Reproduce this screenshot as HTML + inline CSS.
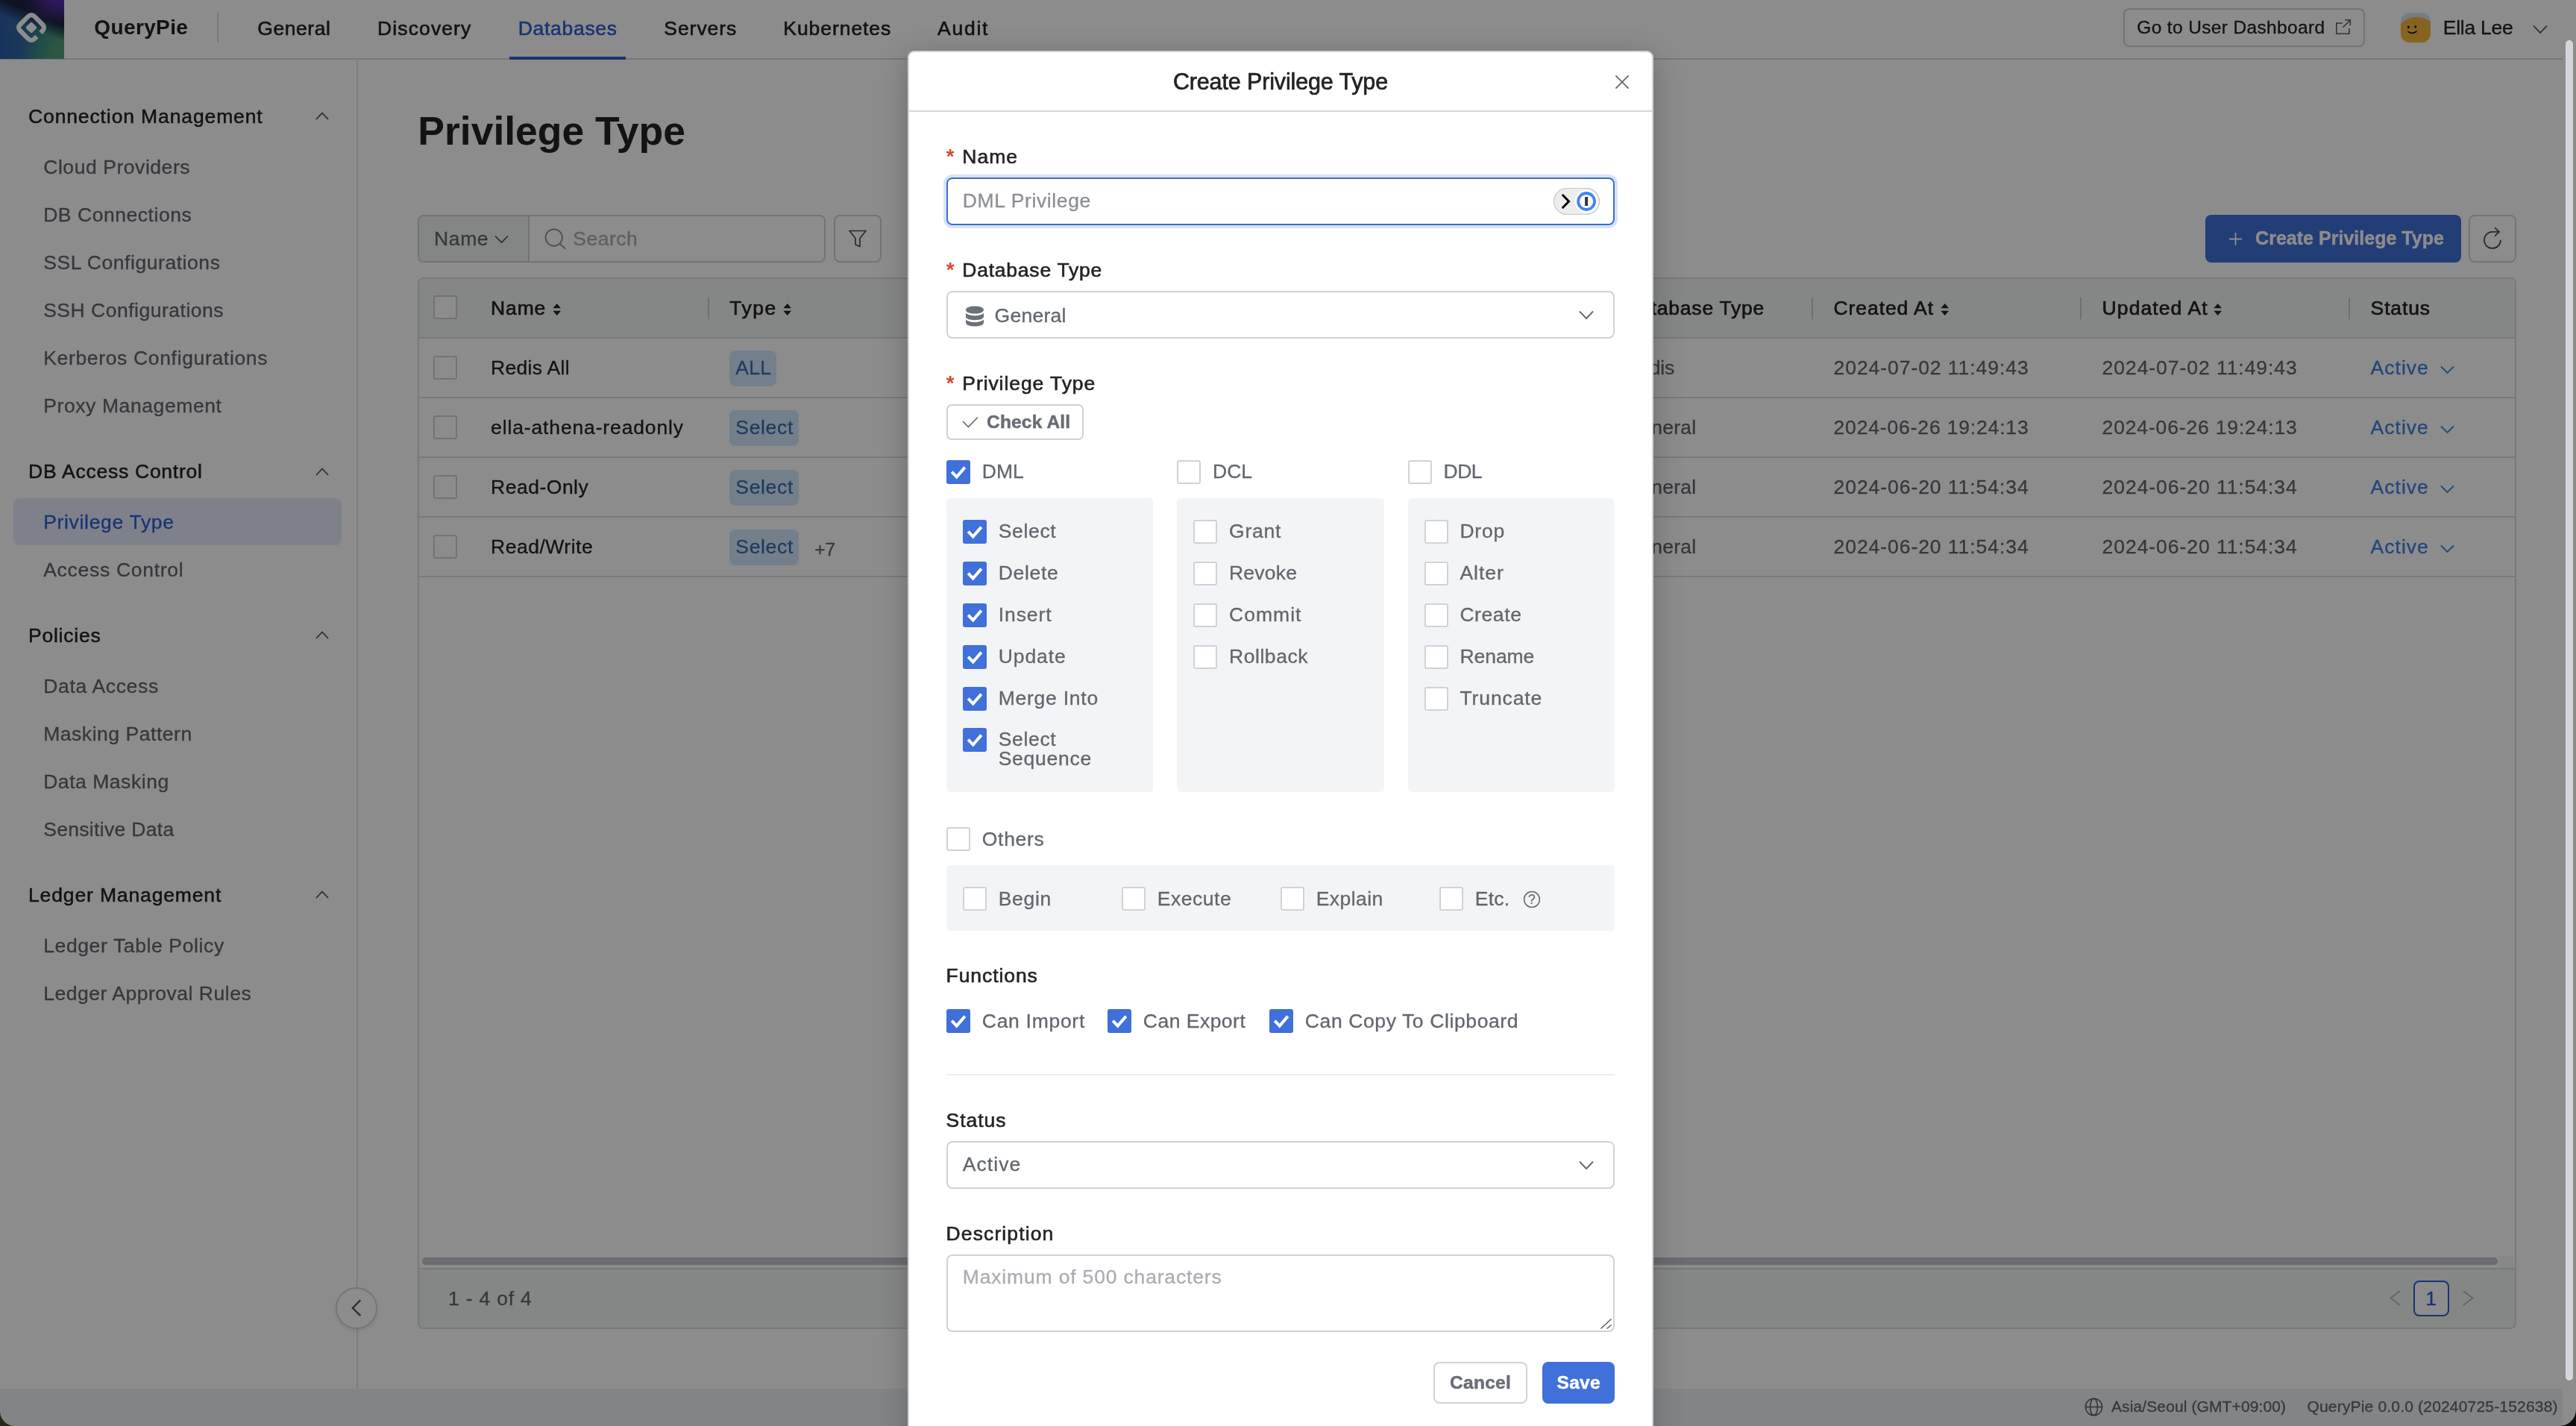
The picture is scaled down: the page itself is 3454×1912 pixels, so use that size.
<!DOCTYPE html>
<html lang="en"><head><meta charset="utf-8"><title>QueryPie - Privilege Type</title>
<style>
*{box-sizing:border-box;margin:0;padding:0}
html,body{width:3454px;height:1912px;overflow:hidden;background:#fff}
body{position:relative;font-family:"Liberation Sans",Arial,sans-serif;-webkit-font-smoothing:antialiased}
.t{position:absolute;white-space:nowrap;display:block}
#app{will-change:transform;position:absolute;left:0;top:0;width:3436px;height:1912px;overflow:hidden;background:#fff}
#mask{position:absolute;left:0;top:0;width:3454px;height:1912px;background:rgba(0,0,0,.45)}
#modal{will-change:transform;position:absolute;left:1217px;top:68px;width:1000px;height:1900px;background:#fff;border:2px solid #d0d3d9;border-radius:9px;box-shadow:0 8px 40px rgba(0,0,0,.22)}
.cb{position:absolute;width:32px;height:32px;border-radius:3px;background:#fff;border:2px solid #cfd2d8}
.cb.on{background:#4070d9;border:0}
.cb.on svg{position:absolute;left:0;top:0}
.gb{position:absolute;background:#f3f4f6;border-radius:5px}
.inp{position:absolute;background:#fff;border:2px solid #cfd2d8;border-radius:8px}
.btn{position:absolute;border:2px solid #cfd2d8;border-radius:8px;background:#fff}
.hl{position:absolute;background:#d9dce1}

</style></head><body>
<div id="app"><header>
<div style="position:absolute;left:0px;top:0px;width:3436px;height:80px;background:#fff;border-bottom:2px solid #d5d9df"></div>
<div style="position:absolute;left:0px;top:0px;width:86px;height:79px;background:radial-gradient(ellipse 50px 34px at 92% 0%, #5a2fb0 0%, rgba(90,47,176,0) 100%),linear-gradient(203deg, #3b2379 0%, #1e2038 18%, #1b2642 31%, rgba(30,50,75,0) 49%),radial-gradient(ellipse 60px 50px at 100% 100%, #56a077 0%, rgba(86,160,119,0) 100%),linear-gradient(to right, #2d5bad 0%, #2f6f9c 45%, #3d8a85 75%, #4f9a78 100%);"><svg width="86" height="79" viewBox="0 0 86 79" fill="none" style="position:absolute;left:0;top:0"><g transform="translate(42 37) rotate(45)"><rect x="-13.6" y="-13.6" width="27.2" height="27.2" rx="5.8" stroke="#fff" stroke-width="6.3" stroke-dasharray="28.2 7.4 200"/><rect x="-5.7" y="-5.7" width="11.4" height="11.4" rx="2.4" fill="#fff"/></g></svg></div>
<span class="t" id="t0" style="top:18.7px;height:36px;line-height:36px;font-size:28.0px;color:#232325;font-weight:700;left:126.3px;letter-spacing:0.38px;">QueryPie</span>
<div style="position:absolute;left:291px;top:17px;width:2px;height:40px;background:#d9dce1"></div>
<span class="t" id="t1" style="top:20.9px;height:34px;line-height:34px;font-size:26.5px;color:#232325;-webkit-text-stroke:0.6px #232325;left:345.3px;letter-spacing:0.55px;">General</span>
<span class="t" id="t2" style="top:20.9px;height:34px;line-height:34px;font-size:26.5px;color:#232325;-webkit-text-stroke:0.6px #232325;left:506.1px;letter-spacing:1.11px;">Discovery</span>
<span class="t" id="t3" style="top:20.9px;height:34px;line-height:34px;font-size:26.5px;color:#2f5fd0;-webkit-text-stroke:0.6px #2f5fd0;left:694.7px;letter-spacing:0.71px;">Databases</span>
<span class="t" id="t4" style="top:20.9px;height:34px;line-height:34px;font-size:26.5px;color:#232325;-webkit-text-stroke:0.6px #232325;left:890.3px;letter-spacing:0.95px;">Servers</span>
<span class="t" id="t5" style="top:20.9px;height:34px;line-height:34px;font-size:26.5px;color:#232325;-webkit-text-stroke:0.6px #232325;left:1050.3px;letter-spacing:0.94px;">Kubernetes</span>
<span class="t" id="t6" style="top:20.9px;height:34px;line-height:34px;font-size:26.5px;color:#232325;-webkit-text-stroke:0.6px #232325;left:1257.0px;letter-spacing:1.77px;">Audit</span>
<div style="position:absolute;left:683px;top:76px;width:156px;height:4px;background:#2f5fd0"></div>
<div style="position:absolute;left:2847px;top:11px;width:323.5px;height:51.5px;border:2px solid #cfd2d8;border-radius:8px;background:#fff"></div>
<span class="t" id="t7" style="top:20.6px;height:32px;line-height:32px;font-size:24.5px;color:#232325;-webkit-text-stroke:0.3px #232325;left:2865.3px;letter-spacing:0.35px;">Go to User Dashboard</span>
<svg style="position:absolute;left:3131.6px;top:25.9px;" width="21" height="21" viewBox="0 0 21 21" fill="none"><path d="M8.8 5 H0.8 V19.3 H17.9 V12" stroke="#5a5f66" stroke-width="1.6"/><path d="M12.2 0.8 H19.3 V8 M19.1 1 L9.4 10.7" stroke="#5a5f66" stroke-width="1.6"/></svg>
<div style="position:absolute;left:3219px;top:17px;width:40px;height:40px;"><svg width="40" height="40" viewBox="0 0 40 40" style="position:absolute;left:0;top:0"><defs><clipPath id="avc"><rect width="40" height="40" rx="12"/></clipPath></defs><g clip-path="url(#avc)"><rect width="40" height="40" fill="#d6e3f3"/><circle cx="21.5" cy="35.8" r="30" fill="#f5b43c"/><ellipse cx="10.4" cy="19.3" rx="1.4" ry="1.9" fill="#111"/><ellipse cx="19.8" cy="18.8" rx="1.4" ry="1.9" fill="#111"/><path d="M10.2 25.6 Q15.5 29.2 21 25.2" stroke="#111" stroke-width="1.7" fill="none" stroke-linecap="round"/></g></svg></div>
<span class="t" id="t8" style="top:19.7px;height:34px;line-height:34px;font-size:26.5px;color:#232325;-webkit-text-stroke:0.3px #232325;left:3275.7px;letter-spacing:-0.23px;">Ella Lee</span>
<svg style="position:absolute;left:3396px;top:32.5px;" width="20" height="13" viewBox="0 0 20 13" fill="none"><path d="M1 1.5 L10.0 11 L19 1.5" stroke="#4b4e54" stroke-width="1.8" stroke-linejoin="miter"/></svg>
</header>
<aside>
<div style="position:absolute;left:0px;top:80px;width:480px;height:1782px;background:#fff;border-right:2px solid #e0e3e8"></div>
<div style="position:absolute;left:18px;top:668px;width:439.5px;height:63px;background:#e6ecfb;border-radius:8px"></div>
<span class="t" id="t9" style="top:138.7px;height:34px;line-height:34px;font-size:26.5px;color:#232325;-webkit-text-stroke:0.5px #232325;left:38.0px;letter-spacing:0.88px;">Connection Management</span>
<svg style="position:absolute;left:422.8px;top:150.2px;" width="18" height="12" viewBox="0 0 18 12" fill="none"><path d="M1 10 L9.0 1.5 L17 10" stroke="#4b4e54" stroke-width="1.7" stroke-linejoin="miter"/></svg>
<span class="t" id="t10" style="top:615.0px;height:34px;line-height:34px;font-size:26.5px;color:#232325;-webkit-text-stroke:0.5px #232325;left:38.0px;letter-spacing:0.75px;">DB Access Control</span>
<svg style="position:absolute;left:422.8px;top:626.5px;" width="18" height="12" viewBox="0 0 18 12" fill="none"><path d="M1 10 L9.0 1.5 L17 10" stroke="#4b4e54" stroke-width="1.7" stroke-linejoin="miter"/></svg>
<span class="t" id="t11" style="top:834.6px;height:34px;line-height:34px;font-size:26.5px;color:#232325;-webkit-text-stroke:0.5px #232325;left:38.0px;letter-spacing:0.77px;">Policies</span>
<svg style="position:absolute;left:422.8px;top:846.1px;" width="18" height="12" viewBox="0 0 18 12" fill="none"><path d="M1 10 L9.0 1.5 L17 10" stroke="#4b4e54" stroke-width="1.7" stroke-linejoin="miter"/></svg>
<span class="t" id="t12" style="top:1182.5px;height:34px;line-height:34px;font-size:26.5px;color:#232325;-webkit-text-stroke:0.5px #232325;left:38.0px;letter-spacing:0.86px;">Ledger Management</span>
<svg style="position:absolute;left:422.8px;top:1194.0px;" width="18" height="12" viewBox="0 0 18 12" fill="none"><path d="M1 10 L9.0 1.5 L17 10" stroke="#4b4e54" stroke-width="1.7" stroke-linejoin="miter"/></svg>
<span class="t" id="t13" style="top:206.9px;height:34px;line-height:34px;font-size:26.5px;color:#61666e;-webkit-text-stroke:0.3px #61666e;left:58.2px;letter-spacing:0.56px;">Cloud Providers</span>
<span class="t" id="t14" style="top:270.8px;height:34px;line-height:34px;font-size:26.5px;color:#61666e;-webkit-text-stroke:0.3px #61666e;left:58.2px;letter-spacing:0.54px;">DB Connections</span>
<span class="t" id="t15" style="top:334.8px;height:34px;line-height:34px;font-size:26.5px;color:#61666e;-webkit-text-stroke:0.3px #61666e;left:58.2px;letter-spacing:0.55px;">SSL Configurations</span>
<span class="t" id="t16" style="top:398.7px;height:34px;line-height:34px;font-size:26.5px;color:#61666e;-webkit-text-stroke:0.3px #61666e;left:58.2px;letter-spacing:0.51px;">SSH Configurations</span>
<span class="t" id="t17" style="top:462.7px;height:34px;line-height:34px;font-size:26.5px;color:#61666e;-webkit-text-stroke:0.3px #61666e;left:58.2px;letter-spacing:0.66px;">Kerberos Configurations</span>
<span class="t" id="t18" style="top:526.6px;height:34px;line-height:34px;font-size:26.5px;color:#61666e;-webkit-text-stroke:0.3px #61666e;left:58.2px;letter-spacing:0.60px;">Proxy Management</span>
<span class="t" id="t19" style="top:682.7px;height:34px;line-height:34px;font-size:26.5px;color:#2f5fd0;-webkit-text-stroke:0.3px #2f5fd0;left:58.2px;letter-spacing:0.68px;">Privilege Type</span>
<span class="t" id="t20" style="top:746.7px;height:34px;line-height:34px;font-size:26.5px;color:#61666e;-webkit-text-stroke:0.3px #61666e;left:58.2px;letter-spacing:0.71px;">Access Control</span>
<span class="t" id="t21" style="top:902.8px;height:34px;line-height:34px;font-size:26.5px;color:#61666e;-webkit-text-stroke:0.3px #61666e;left:58.2px;letter-spacing:0.67px;">Data Access</span>
<span class="t" id="t22" style="top:966.7px;height:34px;line-height:34px;font-size:26.5px;color:#61666e;-webkit-text-stroke:0.3px #61666e;left:58.2px;letter-spacing:0.54px;">Masking Pattern</span>
<span class="t" id="t23" style="top:1030.7px;height:34px;line-height:34px;font-size:26.5px;color:#61666e;-webkit-text-stroke:0.3px #61666e;left:58.2px;letter-spacing:0.54px;">Data Masking</span>
<span class="t" id="t24" style="top:1094.6px;height:34px;line-height:34px;font-size:26.5px;color:#61666e;-webkit-text-stroke:0.3px #61666e;left:58.2px;letter-spacing:0.32px;">Sensitive Data</span>
<span class="t" id="t25" style="top:1251.0px;height:34px;line-height:34px;font-size:26.5px;color:#61666e;-webkit-text-stroke:0.3px #61666e;left:58.2px;letter-spacing:0.62px;">Ledger Table Policy</span>
<span class="t" id="t26" style="top:1315.3px;height:34px;line-height:34px;font-size:26.5px;color:#61666e;-webkit-text-stroke:0.3px #61666e;left:58.2px;letter-spacing:0.52px;">Ledger Approval Rules</span>
<div style="position:absolute;left:450px;top:1726px;width:56px;height:56px;border-radius:50%;background:#fff;border:2px solid #d3d7dd;box-shadow:0 2px 5px rgba(0,0,0,.10)"><svg width="52" height="52" viewBox="0 0 52 52" fill="none"><path d="M31.3 15.3 L20.9 25.7 L31.3 36.1" stroke="#4b4e54" stroke-width="2.3" stroke-linejoin="miter"/></svg></div>
</aside>
<footer>
<div style="position:absolute;left:0px;top:1862px;width:3436px;height:50px;background:#eef0f4"></div>
<svg style="position:absolute;left:2794.5px;top:1873.5px;" width="25" height="25" viewBox="0 0 25 25" fill="none"><circle cx="12.5" cy="12.5" r="11.2" stroke="#5a5f66" stroke-width="1.5"/><ellipse cx="12.5" cy="12.5" rx="5" ry="11.2" stroke="#5a5f66" stroke-width="1.5"/><path d="M1.3 12.5 H23.7" stroke="#5a5f66" stroke-width="1.5"/></svg>
<span class="t" id="t27" style="top:1872.1px;height:27px;line-height:27px;font-size:21.0px;color:#61666e;-webkit-text-stroke:0.3px #61666e;left:2831.0px;letter-spacing:0.11px;">Asia/Seoul (GMT+09:00)</span>
<span class="t" id="t28" style="top:1872.1px;height:27px;line-height:27px;font-size:21.0px;color:#61666e;-webkit-text-stroke:0.3px #61666e;left:3093.5px;letter-spacing:0.18px;">QueryPie 0.0.0 (20240725-152638)</span>
</footer>
<main>
<span class="t" id="t29" style="top:140.5px;height:70px;line-height:70px;font-size:53.5px;color:#232325;font-weight:700;left:560.3px;letter-spacing:-0.01px;">Privilege Type</span>
<div style="position:absolute;left:560px;top:288px;width:547px;height:64px;border:2px solid #cfd2d8;border-radius:8px;background:#fff;overflow:hidden"><div style="position:absolute;left:0;top:0;width:148px;height:60px;background:#f1f3f3;border-right:2px solid #cfd2d8"></div></div>
<span class="t" id="t30" style="top:303.0px;height:34px;line-height:34px;font-size:26.5px;color:#61666e;-webkit-text-stroke:0.3px #61666e;left:582.0px;letter-spacing:0.63px;">Name</span>
<svg style="position:absolute;left:663px;top:314.5px;" width="19" height="12" viewBox="0 0 19 12" fill="none"><path d="M1 1.5 L9.5 10 L18 1.5" stroke="#4b4e54" stroke-width="1.7" stroke-linejoin="miter"/></svg>
<svg style="position:absolute;left:729.5px;top:306px;" width="29" height="29" viewBox="0 0 29 29" fill="none"><circle cx="12.7" cy="12.6" r="11.2" stroke="#858a92" stroke-width="1.7"/><path d="M20.8 20.8 L27.6 27.4" stroke="#858a92" stroke-width="1.7" stroke-linecap="round"/></svg>
<span class="t" id="t31" style="top:303.0px;height:34px;line-height:34px;font-size:26.5px;color:#a8adb5;-webkit-text-stroke:0.3px #a8adb5;left:768.3px;letter-spacing:0.52px;">Search</span>
<div style="position:absolute;left:1118px;top:288px;width:64px;height:64px;border:2px solid #cfd2d8;border-radius:8px;background:#fff"><svg width="60" height="60" viewBox="-1 -1 60 60" fill="none"><path d="M18 18.5 H40 L32 28.5 V39.5 L26 37 V28.5 Z" stroke="#4b4e54" stroke-width="1.7" stroke-linejoin="round"/></svg></div>
<div style="position:absolute;left:2957px;top:288px;width:343px;height:64px;background:#4070d9;border-radius:8px"></div>
<svg style="position:absolute;left:2987.5px;top:310.5px;" width="19" height="19" viewBox="0 0 19 19" fill="none"><path d="M9.5 1 V18 M1 9.5 H18" stroke="#fff" stroke-width="1.8"/></svg>
<span class="t" id="t32" style="top:303.0px;height:32px;line-height:32px;font-size:25.0px;color:#ffffff;font-weight:700;-webkit-text-stroke:0.4px #ffffff;left:3024.1px;letter-spacing:0.02px;">Create Privilege Type</span>
<div style="position:absolute;left:3310px;top:288px;width:64px;height:64px;border:2px solid #cfd2d8;border-radius:8px;background:#fff"><svg width="60" height="60" viewBox="0 0 60 60" fill="none"><path d="M40.9 32.4 A11 11 0 1 1 29.9 20.9 L38.6 20.9" stroke="#4b4e54" stroke-width="1.8" stroke-linecap="round"/><path d="M33.5 15.6 L39 20.9 L33.5 26.1" stroke="#4b4e54" stroke-width="1.8" stroke-linecap="round" stroke-linejoin="round"/></svg></div>
<div style="position:absolute;left:560px;top:372px;width:2814px;height:1410px;border:2px solid #d9dce1;border-radius:8px;background:#fff;overflow:hidden"><div style="position:absolute;left:0;top:0;width:2810px;height:78px;background:#f2f4f4"></div><div style="position:absolute;left:0;top:1327px;width:2810px;height:79px;background:#f2f4f4"></div></div>
<div style="position:absolute;left:562px;top:452px;width:2810px;height:2px;background:#d9dce1"></div>
<div style="position:absolute;left:562px;top:532px;width:2810px;height:2px;background:#d9dce1"></div>
<div style="position:absolute;left:562px;top:612px;width:2810px;height:2px;background:#d9dce1"></div>
<div style="position:absolute;left:562px;top:692px;width:2810px;height:2px;background:#d9dce1"></div>
<div style="position:absolute;left:562px;top:772px;width:2810px;height:2px;background:#d9dce1"></div>
<div style="position:absolute;left:562px;top:1700px;width:2810px;height:2px;background:#d9dce1"></div>
<div style="position:absolute;left:566px;top:1686px;width:2783px;height:10px;background:#c1c5cb;border-radius:5px"></div>
<div style="position:absolute;left:3349px;top:1684px;width:22px;height:16px;background:#f6f7f8"></div>
<div class="cb" style="left:581px;top:396px"></div>
<span class="t" id="t33" style="top:396.0px;height:34px;line-height:34px;font-size:26.5px;color:#232325;-webkit-text-stroke:0.65px #232325;left:658.1px;letter-spacing:0.83px;">Name</span>
<svg style="position:absolute;left:741px;top:404.5px;" width="11.4" height="20" viewBox="0 0 11.4 20" fill="none"><path d="M5.7 2 L11 8.3 H0.4 Z M5.7 18 L0.4 11.7 H11 Z" fill="#232325"/></svg>
<div style="position:absolute;left:949px;top:398.5px;width:2px;height:29px;background:#c9ccd2"></div>
<span class="t" id="t34" style="top:396.0px;height:34px;line-height:34px;font-size:26.5px;color:#232325;-webkit-text-stroke:0.65px #232325;left:978.3px;letter-spacing:1.51px;">Type</span>
<svg style="position:absolute;left:1050px;top:404.5px;" width="11.4" height="20" viewBox="0 0 11.4 20" fill="none"><path d="M5.7 2 L11 8.3 H0.4 Z M5.7 18 L0.4 11.7 H11 Z" fill="#232325"/></svg>
<span class="t" id="t35" style="top:396.0px;height:34px;line-height:34px;font-size:26.5px;color:#232325;-webkit-text-stroke:0.65px #232325;left:2178.3px;letter-spacing:0.77px;">Database Type</span>
<div style="position:absolute;left:2429px;top:398.5px;width:2px;height:29px;background:#c9ccd2"></div>
<span class="t" id="t36" style="top:396.0px;height:34px;line-height:34px;font-size:26.5px;color:#232325;-webkit-text-stroke:0.65px #232325;left:2458.5px;letter-spacing:0.93px;">Created At</span>
<svg style="position:absolute;left:2601.5px;top:404.5px;" width="11.4" height="20" viewBox="0 0 11.4 20" fill="none"><path d="M5.7 2 L11 8.3 H0.4 Z M5.7 18 L0.4 11.7 H11 Z" fill="#232325"/></svg>
<div style="position:absolute;left:2789px;top:398.5px;width:2px;height:29px;background:#c9ccd2"></div>
<span class="t" id="t37" style="top:396.0px;height:34px;line-height:34px;font-size:26.5px;color:#232325;-webkit-text-stroke:0.65px #232325;left:2818.6px;letter-spacing:1.09px;">Updated At</span>
<svg style="position:absolute;left:2968px;top:404.5px;" width="11.4" height="20" viewBox="0 0 11.4 20" fill="none"><path d="M5.7 2 L11 8.3 H0.4 Z M5.7 18 L0.4 11.7 H11 Z" fill="#232325"/></svg>
<div style="position:absolute;left:3149px;top:398.5px;width:2px;height:29px;background:#c9ccd2"></div>
<span class="t" id="t38" style="top:396.0px;height:34px;line-height:34px;font-size:26.5px;color:#232325;-webkit-text-stroke:0.65px #232325;left:3178.6px;letter-spacing:0.87px;">Status</span>
<div class="cb" style="left:581px;top:477.4px"></div>
<span class="t" id="t39" style="top:476.4px;height:34px;line-height:34px;font-size:26.5px;color:#232325;-webkit-text-stroke:0.3px #232325;left:658.1px;letter-spacing:0.30px;">Redis All</span>
<div style="position:absolute;left:978px;top:469.9px;width:63px;height:48px;background:#d4e8ff;border-radius:8px"></div>
<span class="t" id="t40" style="top:476.4px;height:34px;line-height:34px;font-size:26.5px;color:#3b6fa8;-webkit-text-stroke:0.3px #3b6fa8;left:986.3px;letter-spacing:0.32px;">ALL</span>
<span class="t" id="t41" style="top:476.4px;height:34px;line-height:34px;font-size:26.5px;color:#61666e;-webkit-text-stroke:0.3px #61666e;left:2178.3px;letter-spacing:-0.19px;">Redis</span>
<span class="t" id="t42" style="top:476.4px;height:34px;line-height:34px;font-size:26.5px;color:#61666e;-webkit-text-stroke:0.3px #61666e;left:2458.5px;letter-spacing:0.95px;">2024-07-02 11:49:43</span>
<span class="t" id="t43" style="top:476.4px;height:34px;line-height:34px;font-size:26.5px;color:#61666e;-webkit-text-stroke:0.3px #61666e;left:2818.6px;letter-spacing:0.95px;">2024-07-02 11:49:43</span>
<span class="t" id="t44" style="top:476.4px;height:34px;line-height:34px;font-size:26.5px;color:#3f83dd;-webkit-text-stroke:0.3px #3f83dd;left:3178.6px;letter-spacing:1.00px;">Active</span>
<svg style="position:absolute;left:3272px;top:490.4px;" width="19" height="12" viewBox="0 0 19 12" fill="none"><path d="M1 1.5 L9.5 10 L18 1.5" stroke="#3f83dd" stroke-width="1.8" stroke-linejoin="miter"/></svg>
<div class="cb" style="left:581px;top:557.4px"></div>
<span class="t" id="t45" style="top:556.4px;height:34px;line-height:34px;font-size:26.5px;color:#232325;-webkit-text-stroke:0.3px #232325;left:658.1px;letter-spacing:0.86px;">ella-athena-readonly</span>
<div style="position:absolute;left:978px;top:549.9px;width:93px;height:48px;background:#d4e8ff;border-radius:8px"></div>
<span class="t" id="t46" style="top:556.4px;height:34px;line-height:34px;font-size:26.5px;color:#3b6fa8;-webkit-text-stroke:0.3px #3b6fa8;left:986.3px;letter-spacing:0.67px;">Select</span>
<span class="t" id="t47" style="top:556.4px;height:34px;line-height:34px;font-size:26.5px;color:#61666e;-webkit-text-stroke:0.3px #61666e;left:2178.3px;letter-spacing:0.28px;">General</span>
<span class="t" id="t48" style="top:556.4px;height:34px;line-height:34px;font-size:26.5px;color:#61666e;-webkit-text-stroke:0.3px #61666e;left:2458.5px;letter-spacing:0.84px;">2024-06-26 19:24:13</span>
<span class="t" id="t49" style="top:556.4px;height:34px;line-height:34px;font-size:26.5px;color:#61666e;-webkit-text-stroke:0.3px #61666e;left:2818.6px;letter-spacing:0.84px;">2024-06-26 19:24:13</span>
<span class="t" id="t50" style="top:556.4px;height:34px;line-height:34px;font-size:26.5px;color:#3f83dd;-webkit-text-stroke:0.3px #3f83dd;left:3178.6px;letter-spacing:1.00px;">Active</span>
<svg style="position:absolute;left:3272px;top:570.4px;" width="19" height="12" viewBox="0 0 19 12" fill="none"><path d="M1 1.5 L9.5 10 L18 1.5" stroke="#3f83dd" stroke-width="1.8" stroke-linejoin="miter"/></svg>
<div class="cb" style="left:581px;top:637.4px"></div>
<span class="t" id="t51" style="top:636.4px;height:34px;line-height:34px;font-size:26.5px;color:#232325;-webkit-text-stroke:0.3px #232325;left:658.1px;letter-spacing:0.50px;">Read-Only</span>
<div style="position:absolute;left:978px;top:629.9px;width:93px;height:48px;background:#d4e8ff;border-radius:8px"></div>
<span class="t" id="t52" style="top:636.4px;height:34px;line-height:34px;font-size:26.5px;color:#3b6fa8;-webkit-text-stroke:0.3px #3b6fa8;left:986.3px;letter-spacing:0.67px;">Select</span>
<span class="t" id="t53" style="top:636.4px;height:34px;line-height:34px;font-size:26.5px;color:#61666e;-webkit-text-stroke:0.3px #61666e;left:2178.3px;letter-spacing:0.28px;">General</span>
<span class="t" id="t54" style="top:636.4px;height:34px;line-height:34px;font-size:26.5px;color:#61666e;-webkit-text-stroke:0.3px #61666e;left:2458.5px;letter-spacing:0.95px;">2024-06-20 11:54:34</span>
<span class="t" id="t55" style="top:636.4px;height:34px;line-height:34px;font-size:26.5px;color:#61666e;-webkit-text-stroke:0.3px #61666e;left:2818.6px;letter-spacing:0.95px;">2024-06-20 11:54:34</span>
<span class="t" id="t56" style="top:636.4px;height:34px;line-height:34px;font-size:26.5px;color:#3f83dd;-webkit-text-stroke:0.3px #3f83dd;left:3178.6px;letter-spacing:1.00px;">Active</span>
<svg style="position:absolute;left:3272px;top:650.4px;" width="19" height="12" viewBox="0 0 19 12" fill="none"><path d="M1 1.5 L9.5 10 L18 1.5" stroke="#3f83dd" stroke-width="1.8" stroke-linejoin="miter"/></svg>
<div class="cb" style="left:581px;top:717.4px"></div>
<span class="t" id="t57" style="top:716.4px;height:34px;line-height:34px;font-size:26.5px;color:#232325;-webkit-text-stroke:0.3px #232325;left:658.1px;letter-spacing:0.50px;">Read/Write</span>
<div style="position:absolute;left:978px;top:709.9px;width:93px;height:48px;background:#d4e8ff;border-radius:8px"></div>
<span class="t" id="t58" style="top:716.4px;height:34px;line-height:34px;font-size:26.5px;color:#3b6fa8;-webkit-text-stroke:0.3px #3b6fa8;left:986.3px;letter-spacing:0.67px;">Select</span>
<span class="t" id="t59" style="top:720.8px;height:32px;line-height:32px;font-size:24.5px;color:#61666e;-webkit-text-stroke:0.3px #61666e;left:1092.2px;letter-spacing:0.00px;">+7</span>
<span class="t" id="t60" style="top:716.4px;height:34px;line-height:34px;font-size:26.5px;color:#61666e;-webkit-text-stroke:0.3px #61666e;left:2178.3px;letter-spacing:0.28px;">General</span>
<span class="t" id="t61" style="top:716.4px;height:34px;line-height:34px;font-size:26.5px;color:#61666e;-webkit-text-stroke:0.3px #61666e;left:2458.5px;letter-spacing:0.95px;">2024-06-20 11:54:34</span>
<span class="t" id="t62" style="top:716.4px;height:34px;line-height:34px;font-size:26.5px;color:#61666e;-webkit-text-stroke:0.3px #61666e;left:2818.6px;letter-spacing:0.95px;">2024-06-20 11:54:34</span>
<span class="t" id="t63" style="top:716.4px;height:34px;line-height:34px;font-size:26.5px;color:#3f83dd;-webkit-text-stroke:0.3px #3f83dd;left:3178.6px;letter-spacing:1.00px;">Active</span>
<svg style="position:absolute;left:3272px;top:730.4px;" width="19" height="12" viewBox="0 0 19 12" fill="none"><path d="M1 1.5 L9.5 10 L18 1.5" stroke="#3f83dd" stroke-width="1.8" stroke-linejoin="miter"/></svg>
<span class="t" id="t64" style="top:1724.0px;height:34px;line-height:34px;font-size:26.5px;color:#61666e;-webkit-text-stroke:0.3px #61666e;left:601.0px;letter-spacing:0.79px;">1 - 4 of 4</span>
<svg style="position:absolute;left:3203px;top:1729px;" width="18" height="24" viewBox="0 0 18 24" fill="none"><path d="M15 2 L2.5 11.5 L15 21" stroke="#b2b6bc" stroke-width="1.8" stroke-linejoin="miter"/></svg>
<div style="position:absolute;left:3236px;top:1717px;width:48px;height:48px;border:2px solid #2f5fd0;border-radius:8px;background:#fff"></div>
<span class="t" id="t65" style="top:1724.0px;height:34px;line-height:34px;font-size:26.5px;color:#2f5fd0;-webkit-text-stroke:0.3px #2f5fd0;left:3252.2px;letter-spacing:0.79px;">1</span>
<svg style="position:absolute;left:3300px;top:1729px;" width="18" height="24" viewBox="0 0 18 24" fill="none"><path d="M3 2 L15.5 11.5 L3 21" stroke="#b2b6bc" stroke-width="1.8" stroke-linejoin="miter"/></svg>
</main></div>
<div id="mask"></div>
<div id="modal" role="dialog"><div style="position:absolute;left:-1219px;top:-70px;width:0;height:0"><div style="position:absolute;left:1219px;top:148px;width:996px;height:2px;background:#d3d6dc"></div>
<span class="t" id="t66" style="top:89.0px;height:40px;line-height:40px;font-size:30.5px;color:#232325;-webkit-text-stroke:0.7px #232325;left:1572.9px;letter-spacing:-0.14px;">Create Privilege Type</span>
<svg style="position:absolute;left:2165px;top:100px;" width="20" height="20" viewBox="0 0 20 20" fill="none"><path d="M1.4 1.4 L18.6 18.6 M18.6 1.4 L1.4 18.6" stroke="#646a70" stroke-width="1.8"/></svg>
<span class="t" id="t67" style="top:191.5px;height:36px;line-height:36px;font-size:27.5px;color:#d9483b;font-weight:700;left:1268.8px;letter-spacing:0.82px;">*</span><span class="t" id="t68" style="top:193.0px;height:34px;line-height:34px;font-size:26.5px;color:#232325;-webkit-text-stroke:0.6px #232325;left:1290.3px;letter-spacing:1.03px;">Name</span>
<div style="position:absolute;left:1269px;top:238px;width:896px;height:64px;border:2px solid #3c6ed2;border-radius:8px;background:#fff;box-shadow:0 0 0 4px #d9e3f7"></div>
<span class="t" id="t69" style="top:252.3px;height:34px;line-height:34px;font-size:26.5px;color:#8b8f95;-webkit-text-stroke:0.3px #8b8f95;left:1290.8px;letter-spacing:0.63px;">DML Privilege</span>
<div style="position:absolute;left:2083px;top:252px;width:62px;height:36px;"><svg width="62" height="36" viewBox="0 0 62 36" fill="none"><rect x="0.5" y="0.5" width="61" height="35" rx="17.5" fill="#ededed" stroke="#c8c8c8"/><circle cx="44.1" cy="18" r="15.6" fill="#fff"/><path d="M12.6 9.8 L20.6 18 L12.6 26.2" stroke="#000" stroke-width="3" stroke-linejoin="miter" stroke-linecap="round"/><circle cx="44.1" cy="18" r="11" fill="#fff" stroke="#4285f4" stroke-width="3.8"/><rect x="42.1" y="12" width="4" height="12" fill="#333"/><rect x="0.5" y="0.5" width="61" height="35" rx="17.5" fill="none" stroke="#c8c8c8"/></svg></div>
<span class="t" id="t70" style="top:343.5px;height:36px;line-height:36px;font-size:27.5px;color:#d9483b;font-weight:700;left:1268.8px;letter-spacing:0.82px;">*</span><span class="t" id="t71" style="top:345.0px;height:34px;line-height:34px;font-size:26.5px;color:#232325;-webkit-text-stroke:0.6px #232325;left:1290.3px;letter-spacing:0.77px;">Database Type</span>
<div style="position:absolute;left:1269px;top:390px;width:896px;height:64px;border:2px solid #cfd2d8;border-radius:8px;background:#fff"></div>
<svg style="position:absolute;left:1294px;top:408.5px;" width="26" height="30" viewBox="0 0 26 30" fill="none"><path d="M1 6.5 C1 3.5 6 1.5 13 1.5 C20 1.5 25 3.5 25 6.5 C25 9.5 20 11.5 13 11.5 C6 11.5 1 9.5 1 6.5 Z" fill="#6b7178"/><path d="M1 10.5 C3 13.2 8 14.2 13 14.2 C18 14.2 23 13.2 25 10.5 V15.5 C25 18.3 20 20.2 13 20.2 C6 20.2 1 18.3 1 15.5 Z" fill="#6b7178"/><path d="M1 19.2 C3 21.9 8 22.9 13 22.9 C18 22.9 23 21.9 25 19.2 V23.5 C25 26.5 20 28.5 13 28.5 C6 28.5 1 26.5 1 23.5 Z" fill="#6b7178"/></svg>
<span class="t" id="t72" style="top:405.6px;height:34px;line-height:34px;font-size:26.5px;color:#61676e;-webkit-text-stroke:0.3px #61676e;left:1333.5px;letter-spacing:0.28px;">General</span>
<svg style="position:absolute;left:2117px;top:416px;" width="20" height="13" viewBox="0 0 20 13" fill="none"><path d="M1 1.5 L10.0 11 L19 1.5" stroke="#646a71" stroke-width="1.9" stroke-linejoin="miter"/></svg>
<span class="t" id="t73" style="top:495.5px;height:36px;line-height:36px;font-size:27.5px;color:#d9483b;font-weight:700;left:1268.8px;letter-spacing:0.82px;">*</span><span class="t" id="t74" style="top:497.0px;height:34px;line-height:34px;font-size:26.5px;color:#232325;-webkit-text-stroke:0.6px #232325;left:1290.3px;letter-spacing:0.92px;">Privilege Type</span>
<div style="position:absolute;left:1269px;top:542px;width:184px;height:48px;border:2px solid #cfd2d8;border-radius:7px;background:#fff"></div>
<svg style="position:absolute;left:1289px;top:556px;" width="24" height="18" viewBox="0 0 24 18" fill="none"><path d="M2 9 L9.4 16.5 L22 3.5" stroke="#646a71" stroke-width="1.7" stroke-linejoin="miter"/></svg>
<span class="t" id="t75" style="top:550.2px;height:32px;line-height:32px;font-size:24.5px;color:#686e75;font-weight:700;-webkit-text-stroke:0.5px #686e75;left:1323.1px;letter-spacing:0.16px;">Check All</span>
<div class="cb on" style="left:1269px;top:617px"><svg width="32" height="32" viewBox="0 0 32 32" fill="none"><path d="M7.2 15.6 L13.7 22.6 L24.8 9.6" stroke="#fff" stroke-width="4"/></svg></div>
<span class="t" id="t76" style="top:615.3px;height:34px;line-height:34px;font-size:26.5px;color:#61676e;-webkit-text-stroke:0.3px #61676e;left:1316.8px;letter-spacing:0.02px;">DML</span>
<div class="gb" style="left:1269px;top:668px;width:277.3px;height:393.5px"></div>
<div class="cb on" style="left:1291px;top:697px"><svg width="32" height="32" viewBox="0 0 32 32" fill="none"><path d="M7.2 15.6 L13.7 22.6 L24.8 9.6" stroke="#fff" stroke-width="4"/></svg></div>
<span class="t" id="t77" style="top:695.3px;height:34px;line-height:34px;font-size:26.5px;color:#61676e;-webkit-text-stroke:0.3px #61676e;left:1338.7px;letter-spacing:0.67px;">Select</span>
<div class="cb on" style="left:1291px;top:753px"><svg width="32" height="32" viewBox="0 0 32 32" fill="none"><path d="M7.2 15.6 L13.7 22.6 L24.8 9.6" stroke="#fff" stroke-width="4"/></svg></div>
<span class="t" id="t78" style="top:751.3px;height:34px;line-height:34px;font-size:26.5px;color:#61676e;-webkit-text-stroke:0.3px #61676e;left:1338.7px;letter-spacing:0.68px;">Delete</span>
<div class="cb on" style="left:1291px;top:809px"><svg width="32" height="32" viewBox="0 0 32 32" fill="none"><path d="M7.2 15.6 L13.7 22.6 L24.8 9.6" stroke="#fff" stroke-width="4"/></svg></div>
<span class="t" id="t79" style="top:807.3px;height:34px;line-height:34px;font-size:26.5px;color:#61676e;-webkit-text-stroke:0.3px #61676e;left:1338.7px;letter-spacing:0.94px;">Insert</span>
<div class="cb on" style="left:1291px;top:865px"><svg width="32" height="32" viewBox="0 0 32 32" fill="none"><path d="M7.2 15.6 L13.7 22.6 L24.8 9.6" stroke="#fff" stroke-width="4"/></svg></div>
<span class="t" id="t80" style="top:863.3px;height:34px;line-height:34px;font-size:26.5px;color:#61676e;-webkit-text-stroke:0.3px #61676e;left:1338.7px;letter-spacing:0.91px;">Update</span>
<div class="cb on" style="left:1291px;top:921px"><svg width="32" height="32" viewBox="0 0 32 32" fill="none"><path d="M7.2 15.6 L13.7 22.6 L24.8 9.6" stroke="#fff" stroke-width="4"/></svg></div>
<span class="t" id="t81" style="top:919.3px;height:34px;line-height:34px;font-size:26.5px;color:#61676e;-webkit-text-stroke:0.3px #61676e;left:1338.7px;letter-spacing:0.76px;">Merge Into</span>
<div class="cb" style="left:1578.3px;top:617px"></div>
<span class="t" id="t82" style="top:615.3px;height:34px;line-height:34px;font-size:26.5px;color:#61676e;-webkit-text-stroke:0.3px #61676e;left:1626.1px;letter-spacing:-0.01px;">DCL</span>
<div class="gb" style="left:1578.3px;top:668px;width:277.3px;height:393.5px"></div>
<div class="cb" style="left:1600.3px;top:697px"></div>
<span class="t" id="t83" style="top:695.3px;height:34px;line-height:34px;font-size:26.5px;color:#61676e;-webkit-text-stroke:0.3px #61676e;left:1648.0px;letter-spacing:0.80px;">Grant</span>
<div class="cb" style="left:1600.3px;top:753px"></div>
<span class="t" id="t84" style="top:751.3px;height:34px;line-height:34px;font-size:26.5px;color:#61676e;-webkit-text-stroke:0.3px #61676e;left:1648.0px;letter-spacing:0.23px;">Revoke</span>
<div class="cb" style="left:1600.3px;top:809px"></div>
<span class="t" id="t85" style="top:807.3px;height:34px;line-height:34px;font-size:26.5px;color:#61676e;-webkit-text-stroke:0.3px #61676e;left:1648.0px;letter-spacing:1.04px;">Commit</span>
<div class="cb" style="left:1600.3px;top:865px"></div>
<span class="t" id="t86" style="top:863.3px;height:34px;line-height:34px;font-size:26.5px;color:#61676e;-webkit-text-stroke:0.3px #61676e;left:1648.0px;letter-spacing:0.55px;">Rollback</span>
<div class="cb" style="left:1887.7px;top:617px"></div>
<span class="t" id="t87" style="top:615.3px;height:34px;line-height:34px;font-size:26.5px;color:#61676e;-webkit-text-stroke:0.3px #61676e;left:1935.5px;letter-spacing:-0.51px;">DDL</span>
<div class="gb" style="left:1887.7px;top:668px;width:277.3px;height:393.5px"></div>
<div class="cb" style="left:1909.7px;top:697px"></div>
<span class="t" id="t88" style="top:695.3px;height:34px;line-height:34px;font-size:26.5px;color:#61676e;-webkit-text-stroke:0.3px #61676e;left:1957.4px;letter-spacing:0.84px;">Drop</span>
<div class="cb" style="left:1909.7px;top:753px"></div>
<span class="t" id="t89" style="top:751.3px;height:34px;line-height:34px;font-size:26.5px;color:#61676e;-webkit-text-stroke:0.3px #61676e;left:1957.4px;letter-spacing:1.00px;">Alter</span>
<div class="cb" style="left:1909.7px;top:809px"></div>
<span class="t" id="t90" style="top:807.3px;height:34px;line-height:34px;font-size:26.5px;color:#61676e;-webkit-text-stroke:0.3px #61676e;left:1957.4px;letter-spacing:0.59px;">Create</span>
<div class="cb" style="left:1909.7px;top:865px"></div>
<span class="t" id="t91" style="top:863.3px;height:34px;line-height:34px;font-size:26.5px;color:#61676e;-webkit-text-stroke:0.3px #61676e;left:1957.4px;letter-spacing:-0.04px;">Rename</span>
<div class="cb" style="left:1909.7px;top:921px"></div>
<span class="t" id="t92" style="top:919.3px;height:34px;line-height:34px;font-size:26.5px;color:#61676e;-webkit-text-stroke:0.3px #61676e;left:1957.4px;letter-spacing:0.91px;">Truncate</span>
<div class="cb on" style="left:1291px;top:976px"><svg width="32" height="32" viewBox="0 0 32 32" fill="none"><path d="M7.2 15.6 L13.7 22.6 L24.8 9.6" stroke="#fff" stroke-width="4"/></svg></div>
<span class="t" id="t93" style="top:973.8px;height:34px;line-height:34px;font-size:26.5px;color:#61676e;-webkit-text-stroke:0.3px #61676e;left:1338.7px;letter-spacing:0.67px;">Select</span>
<span class="t" id="t94" style="top:999.8px;height:34px;line-height:34px;font-size:26.5px;color:#61676e;-webkit-text-stroke:0.3px #61676e;left:1338.7px;letter-spacing:0.73px;">Sequence</span>
<div class="cb" style="left:1269px;top:1109px"></div>
<span class="t" id="t95" style="top:1108.0px;height:34px;line-height:34px;font-size:26.5px;color:#61676e;-webkit-text-stroke:0.3px #61676e;left:1316.8px;letter-spacing:0.69px;">Others</span>
<div class="gb" style="left:1269px;top:1160px;width:896px;height:87.5px"></div>
<div class="cb" style="left:1291px;top:1189px"></div>
<span class="t" id="t96" style="top:1187.5px;height:34px;line-height:34px;font-size:26.5px;color:#61676e;-webkit-text-stroke:0.3px #61676e;left:1338.7px;letter-spacing:0.68px;">Begin</span>
<div class="cb" style="left:1504px;top:1189px"></div>
<span class="t" id="t97" style="top:1187.5px;height:34px;line-height:34px;font-size:26.5px;color:#61676e;-webkit-text-stroke:0.3px #61676e;left:1551.7px;letter-spacing:0.54px;">Execute</span>
<div class="cb" style="left:1717px;top:1189px"></div>
<span class="t" id="t98" style="top:1187.5px;height:34px;line-height:34px;font-size:26.5px;color:#61676e;-webkit-text-stroke:0.3px #61676e;left:1764.7px;letter-spacing:0.43px;">Explain</span>
<div class="cb" style="left:1930px;top:1189px"></div>
<span class="t" id="t99" style="top:1187.5px;height:34px;line-height:34px;font-size:26.5px;color:#61676e;-webkit-text-stroke:0.3px #61676e;left:1977.7px;letter-spacing:0.28px;">Etc.</span>
<svg style="position:absolute;left:2042px;top:1194px;" width="24" height="24" viewBox="0 0 24 24" fill="none"><circle cx="12" cy="12" r="10.4" stroke="#646a71" stroke-width="1.5"/></svg>
<span class="t" id="t100" style="top:1194.8px;height:23px;line-height:23px;font-size:17.5px;color:#61676e;-webkit-text-stroke:0.2px #61676e;left:2049.1px;letter-spacing:0.53px;">?</span>
<span class="t" id="t101" style="top:1290.5px;height:34px;line-height:34px;font-size:26.5px;color:#232325;-webkit-text-stroke:0.6px #232325;left:1268.6px;letter-spacing:0.92px;">Functions</span>
<div class="cb on" style="left:1269px;top:1353px"><svg width="32" height="32" viewBox="0 0 32 32" fill="none"><path d="M7.2 15.6 L13.7 22.6 L24.8 9.6" stroke="#fff" stroke-width="4"/></svg></div>
<span class="t" id="t102" style="top:1352.0px;height:34px;line-height:34px;font-size:26.5px;color:#61676e;-webkit-text-stroke:0.3px #61676e;left:1316.8px;letter-spacing:0.71px;">Can Import</span>
<div class="cb on" style="left:1485px;top:1353px"><svg width="32" height="32" viewBox="0 0 32 32" fill="none"><path d="M7.2 15.6 L13.7 22.6 L24.8 9.6" stroke="#fff" stroke-width="4"/></svg></div>
<span class="t" id="t103" style="top:1352.0px;height:34px;line-height:34px;font-size:26.5px;color:#61676e;-webkit-text-stroke:0.3px #61676e;left:1532.8px;letter-spacing:0.49px;">Can Export</span>
<div class="cb on" style="left:1702px;top:1353px"><svg width="32" height="32" viewBox="0 0 32 32" fill="none"><path d="M7.2 15.6 L13.7 22.6 L24.8 9.6" stroke="#fff" stroke-width="4"/></svg></div>
<span class="t" id="t104" style="top:1352.0px;height:34px;line-height:34px;font-size:26.5px;color:#61676e;-webkit-text-stroke:0.3px #61676e;left:1749.8px;letter-spacing:0.61px;">Can Copy To Clipboard</span>
<div style="position:absolute;left:1269px;top:1440px;width:896px;height:2px;background:#eceef1"></div>
<span class="t" id="t105" style="top:1485.0px;height:34px;line-height:34px;font-size:26.5px;color:#232325;-webkit-text-stroke:0.6px #232325;left:1268.6px;letter-spacing:0.97px;">Status</span>
<div style="position:absolute;left:1269px;top:1530px;width:896px;height:64px;border:2px solid #cfd2d8;border-radius:8px;background:#fff"></div>
<span class="t" id="t106" style="top:1544.2px;height:34px;line-height:34px;font-size:26.5px;color:#61676e;-webkit-text-stroke:0.3px #61676e;left:1290.8px;letter-spacing:1.06px;">Active</span>
<svg style="position:absolute;left:2117px;top:1556px;" width="20" height="13" viewBox="0 0 20 13" fill="none"><path d="M1 1.5 L10.0 11 L19 1.5" stroke="#646a71" stroke-width="1.9" stroke-linejoin="miter"/></svg>
<span class="t" id="t107" style="top:1636.7px;height:34px;line-height:34px;font-size:26.5px;color:#232325;-webkit-text-stroke:0.6px #232325;left:1268.6px;letter-spacing:1.11px;">Description</span>
<div style="position:absolute;left:1269px;top:1682px;width:896px;height:104px;border:2px solid #cfd2d8;border-radius:8px;background:#fff"></div>
<span class="t" id="t108" style="top:1695.4px;height:34px;line-height:34px;font-size:26.5px;color:#a9adb3;-webkit-text-stroke:0.3px #a9adb3;left:1290.8px;letter-spacing:0.83px;">Maximum of 500 characters</span>
<svg style="position:absolute;left:2144px;top:1766px;" width="18" height="18" viewBox="0 0 18 18" fill="none"><path d="M2.3 15.5 L16.6 2.6 M10.5 15.5 L16.6 10.5" stroke="#505358" stroke-width="1.3"/></svg>
<div style="position:absolute;left:1922px;top:1826px;width:126px;height:56px;border:2px solid #cfd2d8;border-radius:8px;background:#fff"></div>
<span class="t" id="t109" style="top:1837.6px;height:32px;line-height:32px;font-size:24.5px;color:#686e75;font-weight:700;-webkit-text-stroke:0.5px #686e75;left:1944.0px;letter-spacing:0.30px;">Cancel</span>
<div style="position:absolute;left:2068px;top:1826px;width:97px;height:56px;background:#4070d9;border-radius:8px"></div>
<span class="t" id="t110" style="top:1837.6px;height:32px;line-height:32px;font-size:24.5px;color:#fff;font-weight:700;-webkit-text-stroke:0.5px #fff;left:2087.6px;letter-spacing:0.27px;">Save</span></div></div>
<div style="position:absolute;left:3440px;top:54px;width:10px;height:1797px;border-radius:5px;background:#d4d6db"></div>
<svg style="position:absolute;left:0;top:1892px" width="20" height="20" viewBox="0 0 20 20"><path d="M0 0 V20 H20 A20 20 0 0 1 0 0 Z" fill="#212d1b"/></svg>
<svg style="position:absolute;left:3432px;top:1890px" width="22" height="22" viewBox="0 0 22 22"><path d="M22 0 V22 H0 A22 22 0 0 0 22 0 Z" fill="#0b0d0f"/></svg>

</body></html>
